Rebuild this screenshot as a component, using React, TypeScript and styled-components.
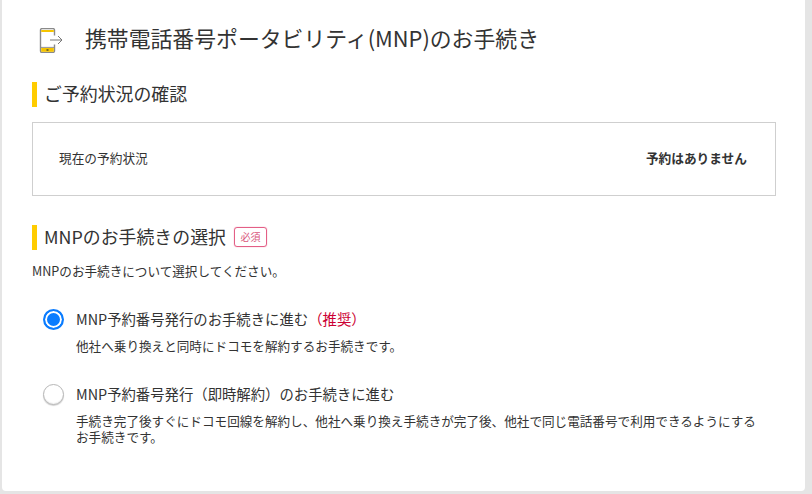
import React from "react";
import styled, { createGlobalStyle } from "styled-components";

const Global = createGlobalStyle`
  html, body { margin: 0; padding: 0; background: #e5e5e5; }
  body { font-family: "Noto Sans CJK JP", "Noto Sans", sans-serif; color: #333; overflow: hidden; }
`;
const Page = styled.div`
  width: 812px; height: 494px; box-sizing: border-box; padding: 0 7px 3px 2px; display: flex;
`;
const Card = styled.main`
  flex: 1; background: #fff; border-radius: 0 0 4px 4px; padding: 0 29px 0 30px; box-sizing: border-box;
`;
const Header = styled.header`
  display: flex; align-items: center; height: 76px; margin-bottom: 6px; padding-left: 7px;
`;
const Title = styled.h1`
  margin: 0 0 0 22px; font-size: 21.85px; font-weight: 400; line-height: 30px;
`;
const SectionTitle = styled.h2`
  margin: 0; display: flex; align-items: center; height: 25px; box-sizing: border-box; border-left: 5px solid #ffcc00;
  padding: 0 0 2px 7px; font-size: 17.9px; font-weight: 400; line-height: 23px;
`;
const StatusBox = styled.div`
  margin-top: 15px; height: 74px; box-sizing: border-box; border: 1px solid #cfcfcf; display: flex;
  align-items: center; justify-content: space-between; padding: 0 28px 4px 26px; font-size: 12.7px;
`;
const Strong = styled.span`
  font-weight: 700;
`;
const SecondSection = styled.section`
  margin-top: 29px;
`;
const Required = styled.span`
  margin-left: 8px; width: 33px; height: 20px; box-sizing: border-box; border: 1px solid #e35f86;
  box-shadow: 0 0 1px #e8668a; border-radius: 3px; color: #d9577c; font-size: 10px; display: flex;
  align-items: center; justify-content: center;
`;
const Lead = styled.p`
  margin: 12px 0 0; font-size: 12.6px; line-height: 18px;
`;
const Options = styled.div`
  margin-top: 29px; display: flex; flex-direction: column; gap: 29px;
`;
const Option = styled.label`
  display: grid; grid-template-columns: 21px 1fr; column-gap: 12px; padding-left: 11px;
`;
const Radio = styled.span<{ $checked?: boolean }>`
  width: 21px; height: 21px; box-sizing: border-box; border-radius: 50%;
  border: ${p => (p.$checked ? "2px solid #0a7cff" : "1px solid #b8b8b8")};
  background: ${p => (p.$checked ? "#0a7cff" : "#fff")};
  box-shadow: ${p => (p.$checked ? "inset 0 0 0 2px #fff" : "inset 0 -1px 1px rgba(0,0,0,.06), 0 1px 1px rgba(0,0,0,.18)")};
`;
const OptionTitle = styled.div`
  font-size: 14.36px; line-height: 20px;
`;
const Recommended = styled.span`
  color: #cc0033;
`;
const OptionText = styled.div`
  margin-top: 9px; max-width: 685px; font-size: 12.6px; line-height: 16.5px;
`;
const IconWrap = styled.svg`
  margin-top: 5px; flex: none;
`;

const PhoneIcon = () => (
  <IconWrap width="24" height="25" viewBox="0 0 24 25" fill="none">
    <path d="M15.5 7.5V2a1.5 1.5 0 0 0-1.5-1.5H3A1.5 1.5 0 0 0 1.5 2v21A1.5 1.5 0 0 0 3 24.5h11a1.5 1.5 0 0 0 1.5-1.5v-6.5" stroke="#8a8a8a" strokeWidth="1.4" />
    <rect x="2.2" y="2" width="12.6" height="2" fill="#f5c400" />
    <path d="M2 19.4h13" stroke="#777" strokeWidth="0.8" />
    <rect x="2.2" y="20" width="12.6" height="3.8" fill="#f5c400" />
    <rect x="7.5" y="21" width="2" height="2" fill="#7a6a20" />
    <path d="M11 12h12M19 8l4 4-4 4" stroke="#777" strokeWidth="1" />
  </IconWrap>
);

export default function App() {
  return (
    <Page>
      <Global />
      <Card>
        <Header>
          <PhoneIcon />
          <Title>携帯電話番号ポータビリティ(MNP)のお手続き</Title>
        </Header>
        <section>
          <SectionTitle>ご予約状況の確認</SectionTitle>
          <StatusBox>
            <span>現在の予約状況</span>
            <Strong>予約はありません</Strong>
          </StatusBox>
        </section>
        <SecondSection>
          <SectionTitle>
            MNPのお手続きの選択<Required>必須</Required>
          </SectionTitle>
          <Lead>MNPのお手続きについて選択してください。</Lead>
          <Options>
            <Option>
              <Radio $checked />
              <div>
                <OptionTitle>
                  MNP予約番号発行のお手続きに進む<Recommended>（推奨）</Recommended>
                </OptionTitle>
                <OptionText>他社へ乗り換えと同時にドコモを解約するお手続きです。</OptionText>
              </div>
            </Option>
            <Option>
              <Radio />
              <div>
                <OptionTitle>MNP予約番号発行（即時解約）のお手続きに進む</OptionTitle>
                <OptionText>
                  手続き完了後すぐにドコモ回線を解約し、他社へ乗り換え手続きが完了後、他社で同じ電話番号で利用できるようにするお手続きです。
                </OptionText>
              </div>
            </Option>
          </Options>
        </SecondSection>
      </Card>
    </Page>
  );
}
